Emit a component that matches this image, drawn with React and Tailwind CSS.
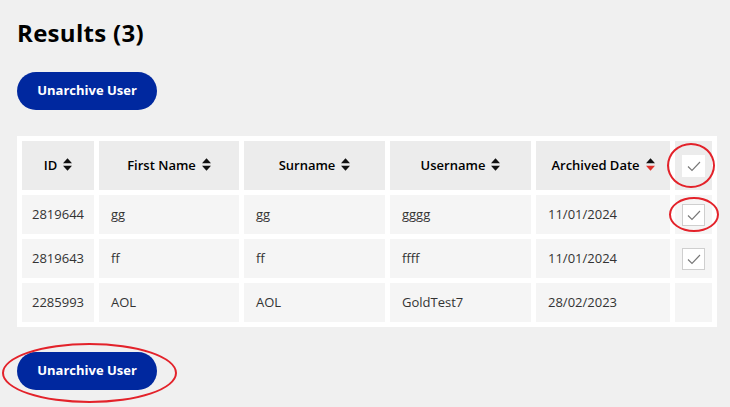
import React from 'react';

const rows = [
  { id: '2819644', first: 'gg', last: 'gg', user: 'gggg', date: '11/01/2024', box: true },
  { id: '2819643', first: 'ff', last: 'ff', user: 'ffff', date: '11/01/2024', box: true },
  { id: '2285993', first: 'AOL', last: 'AOL', user: 'GoldTest7', date: '28/02/2023', box: false },
];

function SortIcon({ active }) {
  return (
    <svg viewBox="0 0 10 14" className="inline-block w-[9px] h-[13px] ml-[6px] align-[-1px]">
      <path d="M5 0 L10 5.5 H0 Z" fill="#111" />
      <path d="M5 14 L10 8.5 H0 Z" fill={active ? '#e0302a' : '#111'} />
    </svg>
  );
}

function Check({ bordered }) {
  return (
    <div
      className={`mx-auto w-[23px] h-[22px] bg-white flex items-center justify-center ${bordered ? 'border border-[#cfcfcf]' : ''}`}
    >
      <svg viewBox="0 0 16 16" className="w-[16px] h-[16px]" fill="none" stroke="#777" strokeWidth="1.1">
        <path d="M2 8.5 L6 12.5 L14 4" />
      </svg>
    </div>
  );
}

function Btn() {
  return (
    <button className="h-[38px] w-[140px] rounded-full bg-[#00289f] text-white text-[13px] font-bold">
      Unarchive User
    </button>
  );
}

export default function App() {
  return (
    <div
      className="relative w-[730px] h-[407px] bg-[#f0f0f0] px-[17px] pt-[18px] overflow-hidden"
      style={{ fontFamily: '"Open Sans", "Liberation Sans", sans-serif' }}
    >
      <h1 className="text-[24px] font-bold text-black leading-[30px] tracking-[0.3px]">Results (3)</h1>
      <div className="mt-[24px]">
        <Btn />
      </div>

      <div className="mt-[26px] bg-white w-[700px]">
        <table className="border-separate border-spacing-[5px] text-[13px] text-[#333]">
          <thead>
            <tr className="h-[49px] text-black font-semibold">
              <th className="w-[72px] bg-[#ececec] font-semibold">ID<SortIcon /></th>
              <th className="w-[140px] bg-[#ececec] font-semibold">First Name<SortIcon /></th>
              <th className="w-[141px] bg-[#ececec] font-semibold">Surname<SortIcon /></th>
              <th className="w-[141px] bg-[#ececec] font-semibold">Username<SortIcon /></th>
              <th className="w-[134px] bg-[#ececec] font-semibold">Archived Date<SortIcon active /></th>
              <th className="w-[37px] bg-[#ececec]"><Check /></th>
            </tr>
          </thead>
          <tbody>
            {rows.map((r) => (
              <tr key={r.id} className="h-[39px]">
                <td className="bg-[#f5f5f5] text-center">{r.id}</td>
                <td className="bg-[#f5f5f5] pl-[12px]">{r.first}</td>
                <td className="bg-[#f5f5f5] pl-[12px]">{r.last}</td>
                <td className="bg-[#f5f5f5] pl-[12px]">{r.user}</td>
                <td className="bg-[#f5f5f5] pl-[12px]">{r.date}</td>
                <td className="bg-[#f5f5f5]">{r.box && <Check bordered />}</td>
              </tr>
            ))}
          </tbody>
        </table>
      </div>

      <div className="mt-[25px]">
        <Btn />
      </div>

      {/* annotation ellipses */}
      <div className="absolute left-[667px] top-[143px] w-[48px] h-[45px] rounded-[50%] border-[2.5px] border-[#e3222a]" />
      <div className="absolute left-[669px] top-[197px] w-[50px] h-[35px] rounded-[50%] border-[2.5px] border-[#e3222a]" />
      <div className="absolute left-[2px] top-[343px] w-[175px] h-[60px] rounded-[50%] border-[2.5px] border-[#e3222a]" />
    </div>
  );
}
